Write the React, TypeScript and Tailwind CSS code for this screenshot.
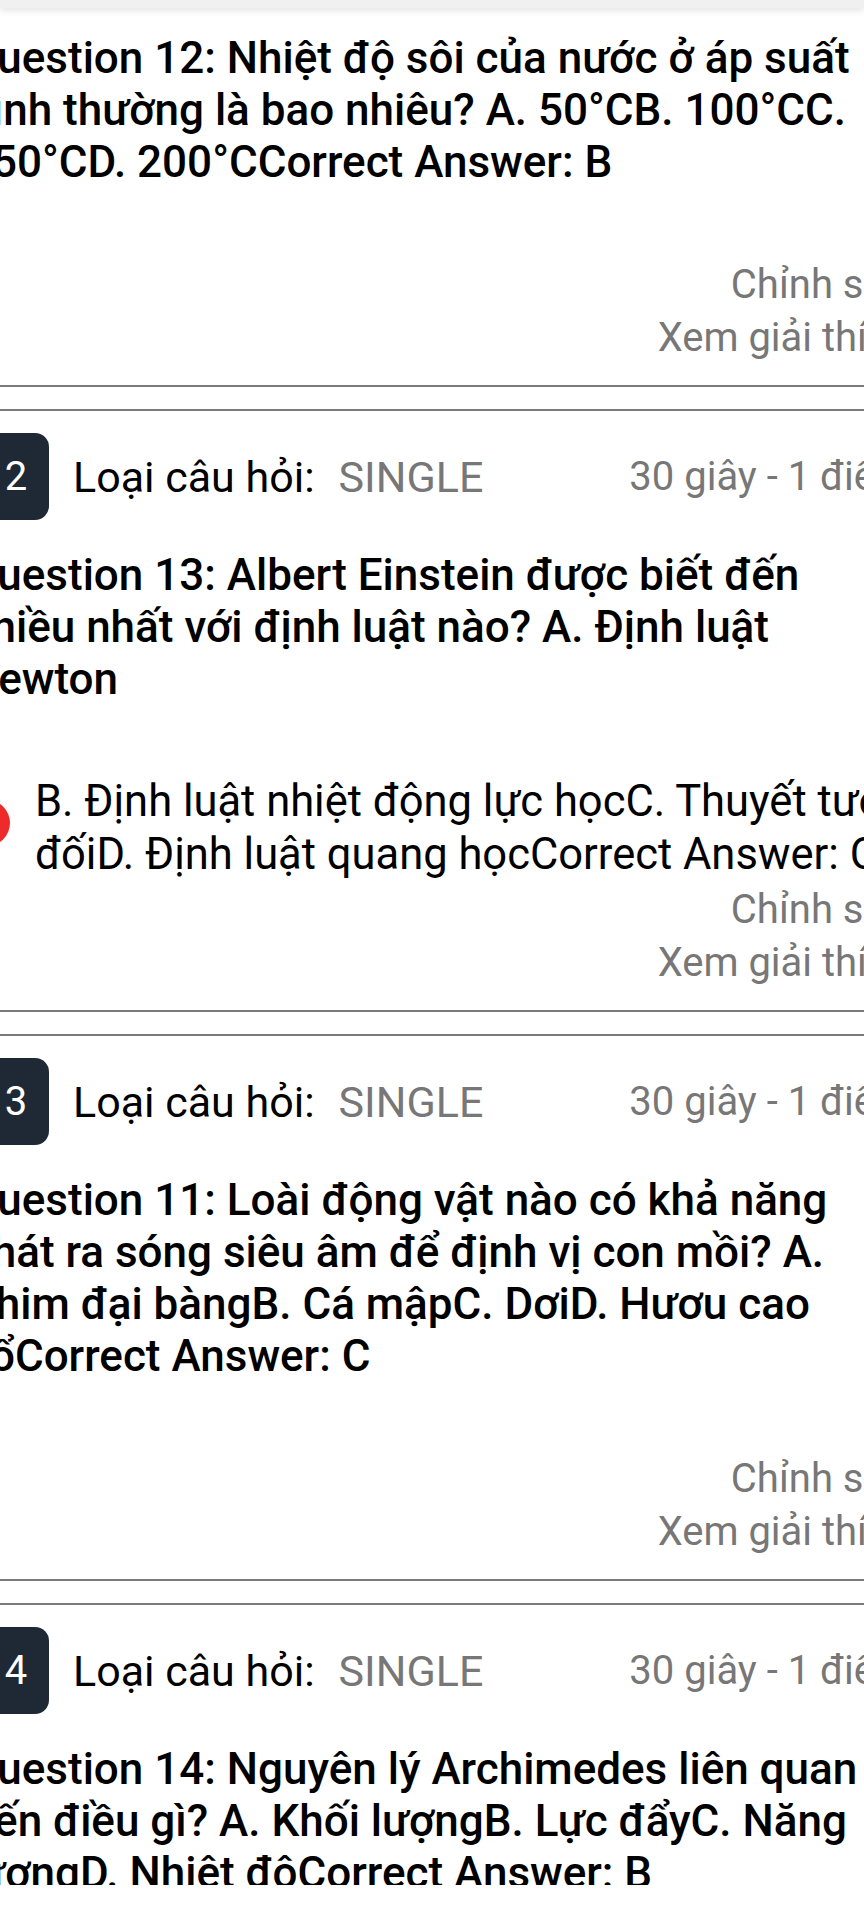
import React from "react";

type Card = { n: number | null; q: string; a: string };

const cards: Card[] = [
  {
    n: null,
    q: "Question 12: Nhiệt độ sôi của nước ở áp suất bình thường là bao nhiêu? A. 50°CB. 100°CC. 150°CD. 200°CCorrect Answer: B",
    a: "",
  },
  {
    n: 2,
    q: "Question 13: Albert Einstein được biết đến nhiều nhất với định luật nào? A. Định luật Newton",
    a: "B. Định luật nhiệt động lực họcC. Thuyết tương đốiD. Định luật quang họcCorrect Answer: C",
  },
  {
    n: 3,
    q: "Question 11: Loài động vật nào có khả năng phát ra sóng siêu âm để định vị con mồi? A. Chim đại bàngB. Cá mậpC. DơiD. Hươu cao cổCorrect Answer: C",
    a: "",
  },
  {
    n: 4,
    q: "Question 14: Nguyên lý Archimedes liên quan đến điều gì? A. Khối lượngB. Lực đẩyC. Năng lượngD. Nhiệt độCorrect Answer: B",
    a: "",
  },
];

function QuestionCard({ card, first }: { card: Card; first: boolean }) {
  return (
    <div
      className={
        (first ? "" : "border-t-2 ") +
        "border-b-2 border-[#7b7b7b] mb-[22px]"
      }
    >
      {card.n !== null ? (
        <div className="flex items-center pt-[22px] pr-[30px]">
          <div className="ml-[23px] w-[66px] h-[87px] rounded-[14px] bg-[#1f2935] text-white flex items-center justify-center text-[40px] leading-none">
            {card.n}
          </div>
          <div className="ml-[24px] text-[43px] leading-[52px] text-black">
            Loại câu hỏi:
            <span className="ml-[24px] text-[#777777]">SINGLE</span>
          </div>
          <div className="ml-auto text-[40px] leading-[52px] text-[#777777] whitespace-nowrap">
            30 giây - 1 điểm
          </div>
        </div>
      ) : null}
      <div
        className={
          (card.n !== null ? "mt-[29px] " : "pt-[24px] ") +
          "pl-[7px] pr-[60px] text-[44px] font-medium leading-[52px] text-black"
        }
      >
        {card.q}
      </div>
      <div className="mt-[70px] pl-[75px] pr-0 text-[43.5px] leading-[53px] text-black relative">
        {card.a ? (
          <>
            <span className="absolute left-[4px] top-[25px] w-[46px] h-[46px] rounded-full bg-[#ee2a2a]" />
            {card.a}
          </>
        ) : null}
      </div>
      <div className="flex flex-col items-end pr-[30px] pb-[21px] mt-[2px] text-[40px] leading-[53px] text-[#777777]">
        <div>Chỉnh sửa</div>
        <div>Xem giải thích</div>
      </div>
    </div>
  );
}

export default function App() {
  return (
    <div className="w-[864px] h-[1920px] bg-white overflow-hidden font-['Roboto',_'Noto_Sans',_sans-serif]">
      <div className="h-[8px] bg-[#f0f0f0] shadow-[0_3px_6px_rgba(0,0,0,0.10)] relative z-10" />
      <div className="h-[1877px] overflow-hidden">
        <div className="ml-[-40px] w-[980px]">
          {cards.map((c, i) => (
            <QuestionCard key={i} card={c} first={i === 0} />
          ))}
        </div>
      </div>
    </div>
  );
}
